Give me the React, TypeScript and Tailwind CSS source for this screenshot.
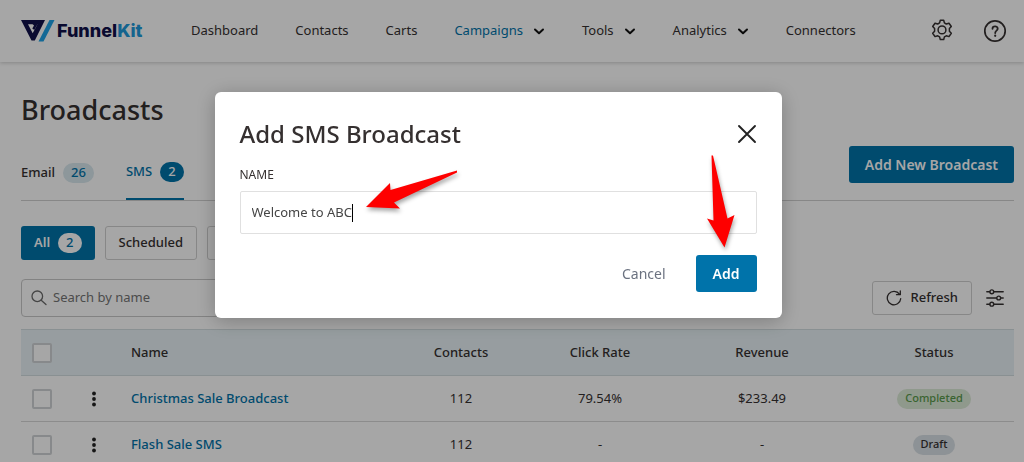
import { useState, type ReactNode } from 'react';
import { clsx } from 'clsx';

interface NavItem {
  label: string;
  active?: boolean;
  menu?: boolean;
}

interface Broadcast {
  name: string;
  contacts: string;
  clickRate: string;
  revenue: string;
  status: 'Completed' | 'Draft';
}

const navItems: NavItem[] = [
  { label: 'Dashboard' },
  { label: 'Contacts' },
  { label: 'Carts' },
  { label: 'Campaigns', active: true, menu: true },
  { label: 'Tools', menu: true },
  { label: 'Analytics', menu: true },
  { label: 'Connectors' },
];

const broadcasts: Broadcast[] = [
  { name: 'Christmas Sale Broadcast', contacts: '112', clickRate: '79.54%', revenue: '$233.49', status: 'Completed' },
  { name: 'Flash Sale SMS', contacts: '112', clickRate: '-', revenue: '-', status: 'Draft' },
];

function Logo() {
  return (
    <a href="#" className="flex w-[170px] shrink-0 items-center gap-[2px]">
      <svg width="34" height="22" viewBox="0 0 34 22" aria-hidden="true">
        <path
          fillRule="evenodd"
          d="M0 0H24L13.800 20.500H10.500ZM7 4.200L11.700 13.200L16.500 4.200Z"
          fill="#10104a"
        />
        <path d="M11 3.500H17L13.300 10L11.300 8.500L13 5.500Z" fill="#10104a" />
        <path d="M28.500 0H33.500L22.500 21.500H17.500Z" fill="#1fa2e6" />
      </svg>
      <span className="font-['Inter',sans-serif] text-lg leading-none font-extrabold text-[#10104a]">
        Funnel<span className="text-[#1f9adb]">Kit</span>
      </span>
    </a>
  );
}

function Chevron() {
  return (
    <svg width="12" height="8" viewBox="0 0 12 8" fill="none" aria-hidden="true">
      <path d="M2 2.500L6 6.300L10 2.500" stroke="#111" strokeWidth="2" strokeLinecap="round" strokeLinejoin="round" />
    </svg>
  );
}

function GearIcon() {
  return (
    <svg width="24" height="24" viewBox="0 0 24 24" fill="none" stroke="#353030" strokeWidth="1.500" strokeLinejoin="round" aria-hidden="true">
      <path d="M10.300 1.200h3.400l.7 2.700 1.900 1.100 2.700-.8 2.300 3.300-1.900 2.100v2.600l1.900 2.100-2.300 3.300-2.700-.8-1.900 1.100-.7 2.700h-3.400l-.7-2.700-1.900-1.100-2.700.8-2.300-3.300 1.900-2.100V9.600L2.700 7.500 5 4.200l2.700.8 1.900-1.100z" />
      <circle cx="12" cy="10.900" r="3.900" />
    </svg>
  );
}

function HelpIcon() {
  return (
    <svg width="24" height="24" viewBox="0 0 24 24" fill="none" stroke="#353030" strokeLinecap="round" aria-hidden="true">
      <circle cx="12" cy="12" r="10.200" strokeWidth="1.700" />
      <path d="M9.500 9.800C9.500 6.600 14.700 6.700 14.700 9.700C14.700 11.700 12.200 11.600 12.200 14" strokeWidth="1.800" />
      <path d="M12.200 16.700V16.800" strokeWidth="2.200" />
    </svg>
  );
}

function SearchIcon() {
  return (
    <svg width="16" height="16" viewBox="0 0 16 16" fill="none" stroke="#6b6b6b" strokeWidth="1.300" strokeLinecap="round" aria-hidden="true">
      <circle cx="6.300" cy="6.300" r="5.300" />
      <path d="M10.200 10.200L15 14.500" />
    </svg>
  );
}

function RefreshIcon() {
  return (
    <svg width="16" height="16" viewBox="0 0 16 16" fill="none" stroke="#353030" strokeWidth="1.300" strokeLinecap="round" strokeLinejoin="round" aria-hidden="true">
      <path d="M14.700 8.700A6.700 6.700 0 1 1 13.500 4.200" />
      <path d="M14.300 1V4.700H10.500" />
    </svg>
  );
}

function SlidersIcon() {
  return (
    <svg width="18" height="18" viewBox="0 0 18 18" fill="none" stroke="#353030" strokeWidth="1.400" strokeLinecap="round" aria-hidden="true">
      <path d="M.8 2.800H3.700M8 2.800H17.200M.8 9H10.500M14.800 9H17.200M.8 15.200H3.700M8 15.200H17.200" />
      <circle cx="5.800" cy="2.800" r="1.900" />
      <circle cx="12.700" cy="9" r="1.900" />
      <circle cx="5.800" cy="15.200" r="1.900" />
    </svg>
  );
}

function Count({ children, className }: { children: ReactNode; className: string }) {
  return (
    <span className={clsx('inline-flex h-5 items-center justify-center rounded-full px-2 text-[13px]', className)}>{children}</span>
  );
}

function TopBar() {
  return (
    <header className="flex h-[62px] items-center bg-white pr-[17px] pl-[21px] shadow-[0_1px_4px_rgba(0,0,0,0.2)]">
      <Logo />
      <nav className="flex flex-1 items-center gap-[37px]">
        {navItems.map((item) => (
          <a
            key={item.label}
            href="#"
            className={clsx('flex items-center gap-[10px] text-[13px]', item.active ? 'text-[#0073aa]' : 'text-[#353030]')}
          >
            {item.label}
            {item.menu && <Chevron />}
          </a>
        ))}
      </nav>
      <div className="flex items-center gap-[29px]">
        <button type="button" aria-label="Settings">
          <GearIcon />
        </button>
        <button type="button" aria-label="Help">
          <HelpIcon />
        </button>
      </div>
    </header>
  );
}

function BroadcastTable() {
  return (
    <table className="mt-3 w-full table-fixed border-collapse text-[13px] text-[#353030]">
      <colgroup>
        <col className="w-[52px]" />
        <col className="w-[42px]" />
        <col />
        <col className="w-[138px]" />
        <col className="w-[140px]" />
        <col className="w-[184px]" />
        <col className="w-[160px]" />
      </colgroup>
      <thead>
        <tr className="h-[46px] border-y border-[#d3dde0] bg-[#e8f2f6]">
          <th className="pl-[11px] text-left">
            <input type="checkbox" aria-label="Select all" className="block size-5 appearance-none rounded-xs border-2 border-[#d0d3d6] bg-white" />
          </th>
          <th />
          <th className="pl-4 text-left font-medium">Name</th>
          <th className="font-medium">Contacts</th>
          <th className="font-medium">Click Rate</th>
          <th className="font-medium">Revenue</th>
          <th className="font-medium">Status</th>
        </tr>
      </thead>
      <tbody>
        {broadcasts.map((row) => (
          <tr key={row.name} className="h-[46px] border-b border-[#d8d8d8] text-center">
            <td className="pl-[11px]">
              <input type="checkbox" aria-label={row.name} className="block size-5 appearance-none rounded-xs border-2 border-[#d0d3d6] bg-white" />
            </td>
            <td>
              <button type="button" aria-label="Actions" className="block w-full">
                <svg width="4" height="16" viewBox="0 0 4 16" fill="#222" className="mx-auto" aria-hidden="true">
                  <circle cx="2" cy="2.500" r="1.900" />
                  <circle cx="2" cy="8" r="1.900" />
                  <circle cx="2" cy="13.500" r="1.900" />
                </svg>
              </button>
            </td>
            <td className="pl-4 text-left">
              <a href="#" className="font-medium text-[#0073aa]">{row.name}</a>
            </td>
            <td>{row.contacts}</td>
            <td>{row.clickRate}</td>
            <td>{row.revenue}</td>
            <td>
              <span
                className={clsx(
                  'inline-flex h-5 items-center rounded-full px-2 text-[11px] font-medium',
                  row.status === 'Completed' ? 'bg-[#dcebd7] text-[#5a9a4c]' : 'bg-[#d9e1e6] text-[#353030]',
                )}
              >
                {row.status}
              </span>
            </td>
          </tr>
        ))}
      </tbody>
    </table>
  );
}

function AddBroadcastDialog() {
  const [name, setName] = useState('Welcome to ABC');

  return (
    <div className="fixed inset-0 flex items-start justify-center bg-black/35 pt-[92px] pr-7">
      <form
        role="dialog"
        aria-labelledby="dialog-title"
        onSubmit={(e) => e.preventDefault()}
        className="relative w-full max-w-[567px] rounded-md bg-white px-[25px] pt-6 pb-[26px] shadow-[0_3px_20px_rgba(0,0,0,0.25)]"
      >
        <div className="flex h-9 items-center justify-between">
          <h2 id="dialog-title" className="text-2xl font-medium text-[#353030]">Add SMS Broadcast</h2>
          <button type="button" aria-label="Close">
            <svg width="20" height="20" viewBox="0 0 20 20" aria-hidden="true">
              <path d="M2 2L18 18M18 2L2 18" stroke="#222" strokeWidth="1.900" strokeLinecap="round" />
            </svg>
          </button>
        </div>
        <label htmlFor="broadcast-name" className="mt-[15px] block text-xs leading-4 text-[#353030]">NAME</label>
        <div className="mt-2 flex h-[43px] items-center rounded-xs border border-[#e0e0e0] px-[11px]">
          <input
            id="broadcast-name"
            type="text"
            value={name}
            onChange={(e) => setName(e.target.value)}
            className="field-sizing-content text-[13px] text-[#454545] caret-transparent outline-none"
          />
          <span className="h-[18px] w-px bg-black" />
        </div>
        <div className="mt-[21px] flex items-center justify-end gap-[30px]">
          <button type="button" className="text-sm text-[#6b7280]">Cancel</button>
          <button type="submit" className="h-[37px] rounded-[3px] bg-[#0073aa] px-[17px] text-sm font-semibold text-white">Add</button>
        </div>

        {/* pointer arrows over the name field and the submit button */}
        <svg
          width="567"
          height="226"
          viewBox="215 92 567 226"
          className="pointer-events-none absolute top-0 right-0 drop-shadow-[1px_3px_2px_rgba(0,0,0,0.35)]"
          fill="#fe0000"
          aria-hidden="true"
        >
          <path d="M366 207L390 183L390.500 190L457 170.500L457 172.500L394 202.500L400 208.500Z" />
          <path d="M711.500 155.500L713 155.500L727.500 218.500L734.500 215L724.500 247.500L707 218.500L713.500 220.500Z" />
        </svg>
      </form>
    </div>
  );
}

export default function App() {
  return (
    <div className="min-h-screen bg-white font-['Noto_Sans',sans-serif]">
      <TopBar />
      <main className="pr-[10px] pl-[21px]">
        <h1 className="pt-7 text-[27px] leading-10 font-medium text-[#353030]">Broadcasts</h1>

        <div className="mt-4 flex items-start justify-between border-b border-[#d0d0d0]">
          <div className="flex gap-8 text-[13px] font-medium">
            <a href="#" className="flex h-[54px] items-center gap-2 text-[#353030]">
              Email
              <Count className="bg-[#d9e8ee] text-[#0073aa]">26</Count>
            </a>
            <a href="#" className="flex h-[54px] items-center gap-2 border-b-2 border-[#0073aa] text-[#0073aa]">
              SMS
              <Count className="bg-[#0073aa] text-white">2</Count>
            </a>
          </div>
          <button type="button" className="h-[37px] rounded-[3px] bg-[#0073aa] px-4 text-sm font-semibold text-white">
            Add New Broadcast
          </button>
        </div>

        <div className="mt-[25px] flex gap-[10px] text-[13px]">
          <button type="button" className="flex h-[34px] items-center gap-2 rounded-[3px] bg-[#0073aa] px-[13px] font-semibold text-white">
            All
            <Count className="bg-white font-medium text-[#0073aa]">2</Count>
          </button>
          <button type="button" className="h-[34px] rounded-[3px] border border-[#d0d0d0] px-[13px] font-medium text-[#353030]">
            Scheduled
          </button>
          <div className="h-[34px] w-24 rounded-[3px] border border-[#d0d0d0]" />
        </div>

        <div className="mt-[19px] flex items-center justify-between">
          <label className="flex h-[38px] w-80 items-center gap-[6px] rounded-sm border border-[#c8c8c8] px-[9px]">
            <SearchIcon />
            <input
              type="search"
              aria-label="Search by name"
              placeholder="Search by name"
              className="min-w-0 flex-1 text-[13px] outline-none placeholder:text-[#757575]"
            />
          </label>
          <div className="flex items-center gap-[14px] pr-[10px]">
            <button type="button" className="flex h-[34px] items-center gap-[9px] rounded-[3px] border border-[#d0d0d0] px-[13px] text-[13px] font-medium text-[#353030]">
              <RefreshIcon />
              Refresh
            </button>
            <button type="button" aria-label="Columns">
              <SlidersIcon />
            </button>
          </div>
        </div>

        <BroadcastTable />
      </main>
      <AddBroadcastDialog />
    </div>
  );
}
